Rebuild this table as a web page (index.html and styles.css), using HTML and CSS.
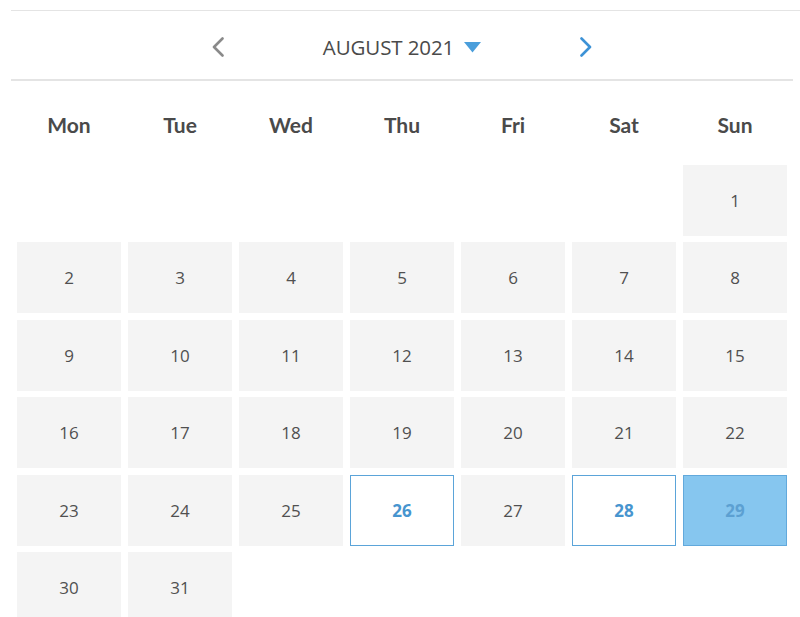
FILE: index.html
```html
<!DOCTYPE html>
<html>
<head>
<meta charset="utf-8">
<link rel="stylesheet" href="styles.css">
</head>
<body>
<div class="cal">
  <div class="rule rule-top"></div>
  <div class="nav">
    <span class="chev chev-prev">
      <svg width="14" height="20" viewBox="0 0 14 20"><path d="M11.5 1.5 L3 10 L11.5 18.5" fill="none" stroke="#8a8a8a" stroke-width="2.6" stroke-linecap="round" stroke-linejoin="round"/></svg>
    </span>
    <span class="title">AUGUST 2021
      <svg class="caret" width="17" height="11" viewBox="0 0 17 11"><path d="M0 0 H17 L8.5 10.5 Z" fill="#4a9edb"/></svg>
    </span>
    <span class="chev chev-next">
      <svg width="14" height="20" viewBox="0 0 14 20"><path d="M2.5 1.5 L11 10 L2.5 18.5" fill="none" stroke="#3d92d6" stroke-width="2.6" stroke-linecap="round" stroke-linejoin="round"/></svg>
    </span>
  </div>
  <div class="rule rule-bottom"></div>
  <div class="weekdays">
    <div>Mon</div><div>Tue</div><div>Wed</div><div>Thu</div><div>Fri</div><div>Sat</div><div>Sun</div>
  </div>
  <div class="grid">
    <div class="blank"></div><div class="blank"></div><div class="blank"></div><div class="blank"></div><div class="blank"></div><div class="blank"></div>
    <div class="day">1</div>
    <div class="day">2</div><div class="day">3</div><div class="day">4</div><div class="day">5</div><div class="day">6</div><div class="day">7</div><div class="day">8</div>
    <div class="day">9</div><div class="day">10</div><div class="day">11</div><div class="day">12</div><div class="day">13</div><div class="day">14</div><div class="day">15</div>
    <div class="day">16</div><div class="day">17</div><div class="day">18</div><div class="day">19</div><div class="day">20</div><div class="day">21</div><div class="day">22</div>
    <div class="day">23</div><div class="day">24</div><div class="day">25</div><div class="day marked">26</div><div class="day">27</div><div class="day marked">28</div><div class="day selected">29</div>
    <div class="day">30</div><div class="day">31</div>
  </div>
</div>
</body>
</html>
```
FILE: styles.css
```css
html, body {
  margin: 0;
  padding: 0;
  background: #ffffff;
  overflow: hidden;
}
body {
  font-family: "Open Sans", "Liberation Sans", sans-serif;
  color: #4d4d4d;
}
.cal {
  width: 800px;
  height: 617px;
  overflow: hidden;
  padding-top: 10px;
  box-sizing: border-box;
}
.rule {
  height: 1px;
  background: #e4e4e4;
}
.rule-top {
  margin-left: 11px;
}
.rule-bottom {
  margin: 0 7px 0 11px;
  height: 2px;
  background: #e4e4e4;
}
.nav {
  height: 68px;
  padding-left: 11px;
  padding-right: 7px;
  display: flex;
  align-items: center;
  justify-content: center;
  gap: 98px;
  padding-top: 3px;
  box-sizing: border-box;
}
.chev {
  display: flex;
  width: 14px;
  height: 20px;
}
.title {
  font-size: 20.5px;
  color: #4a4a4a;
  letter-spacing: -0.1px;
  display: flex;
  align-items: center;
  gap: 10px;
  line-height: 1;
  padding-top: 1px;
}
.weekdays {
  margin-left: 17px;
  width: 770px;
  display: grid;
  grid-template-columns: repeat(7, 1fr);
  column-gap: 7px;
  height: 84px;
  padding-top: 3px;
  box-sizing: border-box;
  align-items: center;
}
.weekdays div {
  text-align: center;
  font-family: "Lato", "Open Sans", sans-serif;
  font-weight: 700;
  font-size: 21px;
  color: #4a4a4a;
}
.grid {
  margin-left: 17px;
  width: 770px;
  display: grid;
  grid-template-columns: repeat(7, 1fr);
  column-gap: 7px;
  row-gap: 6.4px;
  grid-auto-rows: 71px;
}
.day {
  background: #f4f4f4;
  display: flex;
  align-items: center;
  justify-content: center;
  font-size: 17px;
  color: #505050;
  box-sizing: border-box;
}
.day.marked {
  background: #ffffff;
  border: 1.5px solid #5ba4d9;
  color: #4795cf;
  font-weight: 700;
}
.day.selected {
  background: #86c6ef;
  border: 1.5px solid #62a9dc;
  color: #5ca0d2;
  font-weight: 700;
}
```
